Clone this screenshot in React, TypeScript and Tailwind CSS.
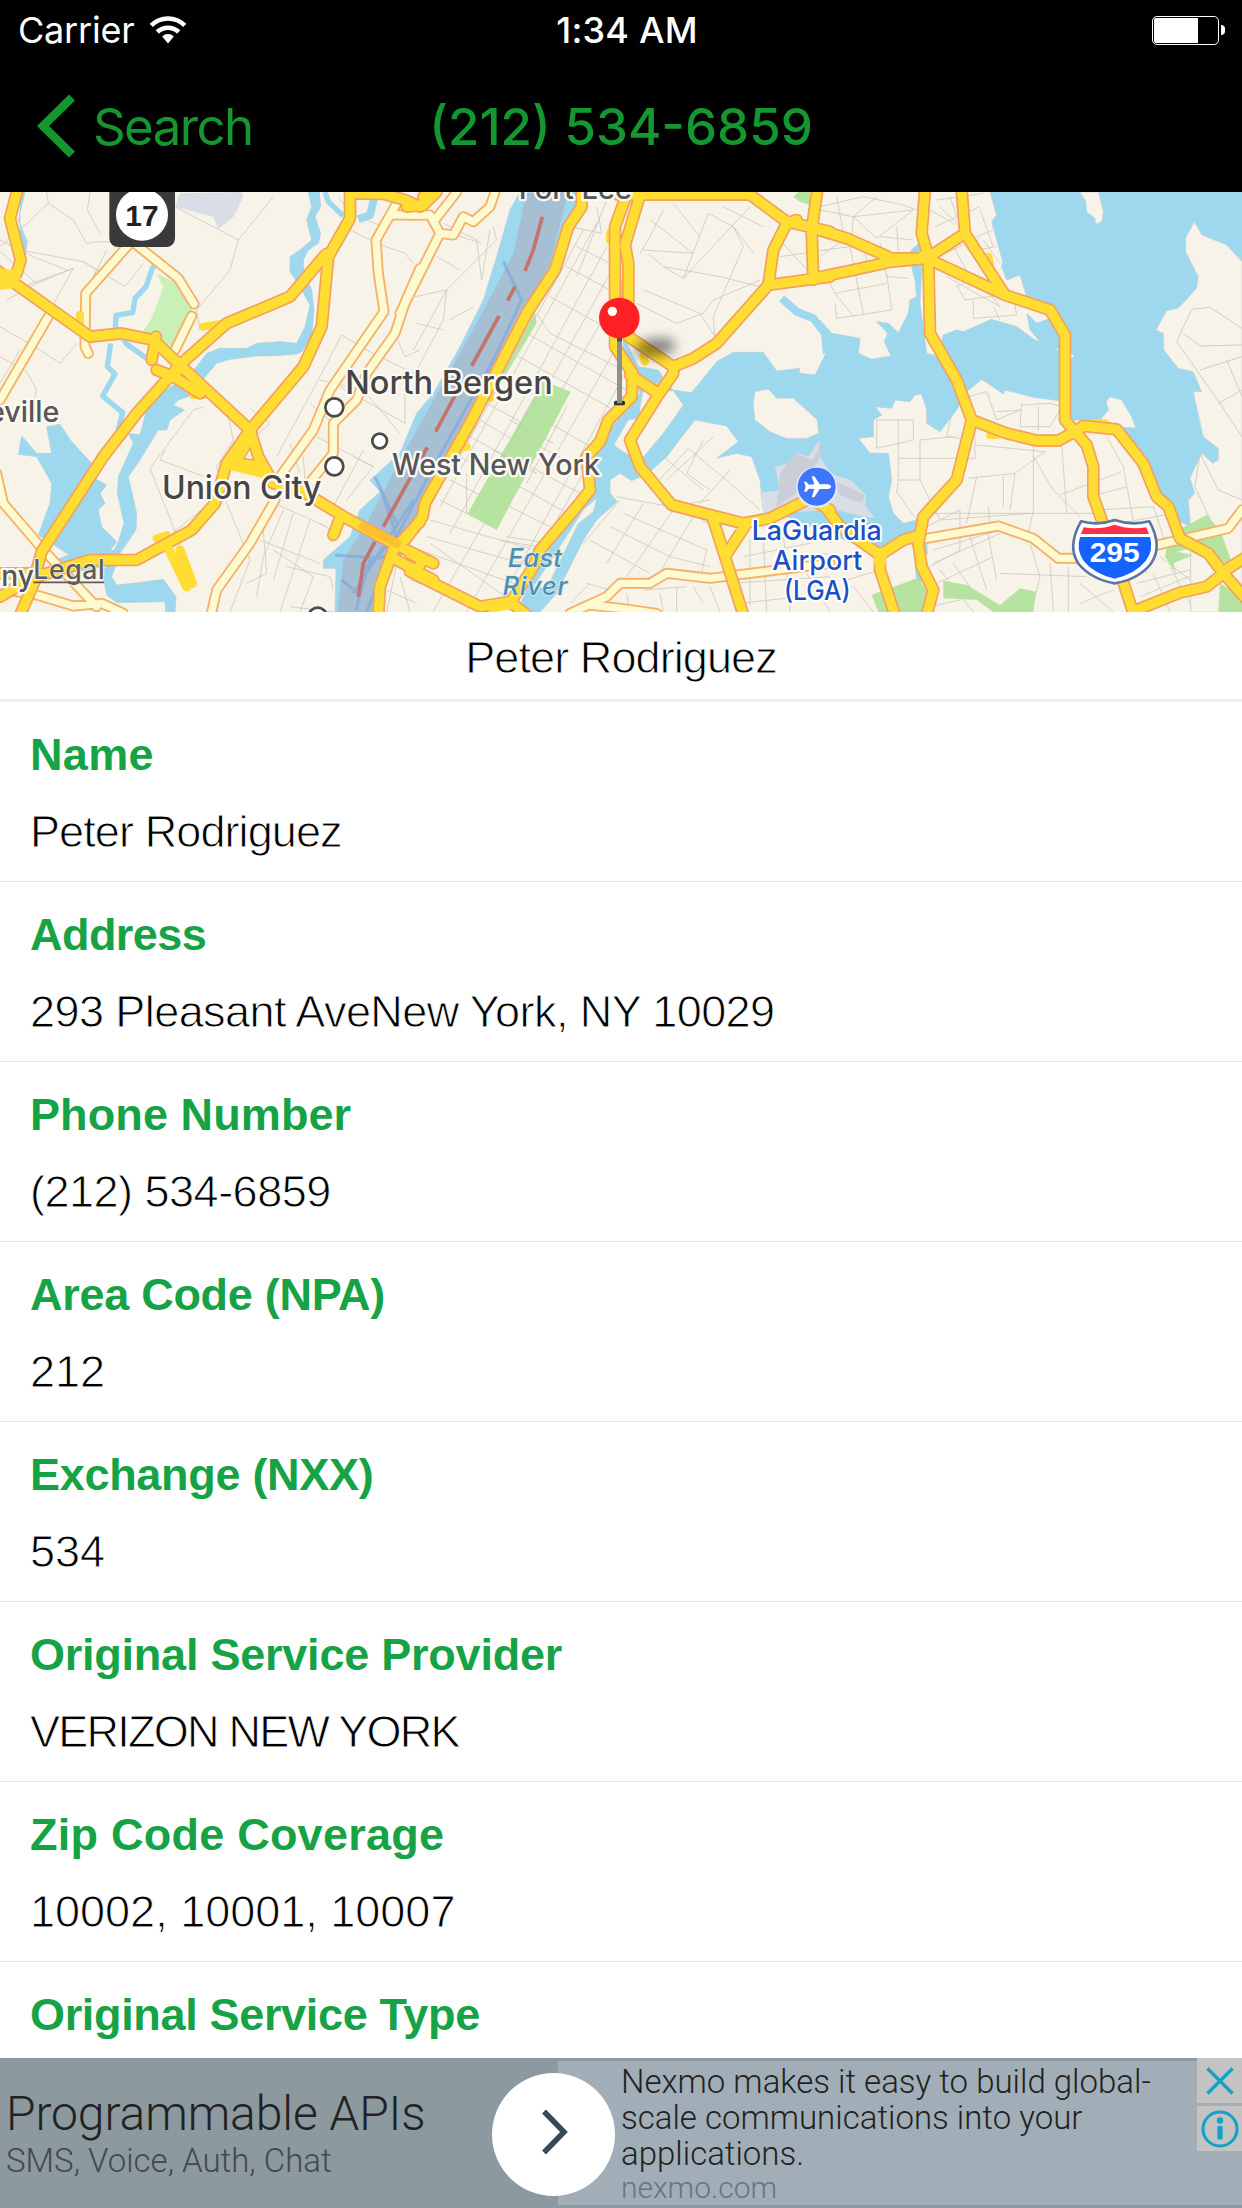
import React from "react";

/** Every shape lists the x offset of the map tile it belongs to, then its path. */
type Shape = [number, string];

const A = 0;
const B = 1230;
const C = 2460;

const streets: Shape[] = [
  [A, "M140 6L145 40 70 110 0 170M145 40L220 90 260 160 300 155 340 155M270 6L262 60 300 130M525 50L715 150 690 240 590 360 600 420M715 150L820 20M0 185L110 280 220 235 70 290M60 180L250 215 375 290 430 220M250 215L290 240 280 260 320 180M110 280L20 330M220 235L140 380M0 410L120 480 180 520 230 460M0 500L80 545 110 600 100 640M60 480L0 580M200 240L100 200 0 150"],
  [A, "M580 660L450 835 520 1010 575 1160M680 660L700 750 650 830 680 940 750 1110M480 810L640 870M480 810L495 780M580 660L610 650M750 655L810 700 700 800M640 930L480 1060M1025 435L960 560 830 800M1025 435L1100 480 1260 560M1050 120L1130 160 1215 190 1240 220M1015 20L1050 70 1150 110M1175 410L1215 500 1260 480M1020 590L1215 700 1215 600M960 570L1090 600 1200 730M930 640L1000 700M950 740L1120 830 1080 880 1040 930M1090 780L1000 950M1120 830L1060 800M910 800L915 880M870 760L900 850"],
  [A, "M800 930L980 1010M850 960L790 1100 770 1220M930 990L840 1266M880 970L820 1170M780 1050L960 1120M820 1080L940 1160 900 1266M860 1130L990 1160 1000 1200M870 1250L1000 1266M750 1110L690 1266M790 1020L800 1150 740 1180M960 1000L1010 1030M1200 1160L1230 1266M1230 1170L1260 1180M1160 1200L1250 1240M1190 1120L1160 1266"],
  [B, "M15 320L110 300 260 150 250 110M100 100L200 150 215 270 240 120M110 300L100 390 20 540M110 300L10 480M215 160L60 110M120 390L190 350M100 420L20 400M80 200L150 240M560 50L575 130 480 110M590 30L500 260M700 300L870 370 915 440M715 190L760 230 820 265 1020 50M760 230L930 260 1090 300M895 70L970 110 1030 190M895 70L820 265M720 90L850 190 700 180M760 60L720 140 690 190M790 40L870 140M680 340L800 400 880 370 910 330 1050 270M915 440L910 380 1000 170 970 110M940 50L1060 110M1110 200L1250 180M1110 150L1200 250"],
  [B, "M835 775L960 880 1050 960M835 775L720 900M880 750L830 850 900 900M910 740L770 870M960 840L870 940M760 800L880 900M700 700L790 760M620 920L780 950 900 930M630 930L520 1060M640 970L890 1080 870 1170M540 1050L720 1150M600 1010L780 1100M700 940L590 1120M790 960L650 1160M850 980L730 1180M780 1100L900 1130M540 1180L480 1240M530 1180L600 1200M700 1200L830 1190M750 1210L760 1266M900 1190L930 1266M1020 1050L1020 1250M1060 1040L1070 1266M1120 1030L1140 1266M1000 1100L1200 1060M960 1180L1260 1160M990 1240L1260 1210M1190 1150L1260 1266M650 1210L660 1266M800 1190L800 1266M850 1190L880 1240M920 1020L850 970"],
  [C, "M0 60L100 80 170 145 280 60 100 80 95 140M50 20L65 100 70 130M0 50L130 20 250 45 290 60M170 20L100 80M10 180L90 170 130 370M0 200L70 150M20 260L45 310 100 380M45 310L200 280M45 340L50 385 215 360 200 250M130 150L140 220M180 160L200 260 265 265M230 110L235 180M280 150L180 140M345 110L480 50M360 50L420 110M330 60L400 100M350 30L490 10M445 150L520 120M470 180L530 170M490 150L540 220M400 170L450 260M375 190L460 150M410 285L435 330 580 310M460 330L460 385 590 375 580 320M520 350L540 390M500 300L540 350M380 260L540 350M410 290L470 260M390 20L410 80M480 60L520 170"],
  [C, "M445 620L500 605 530 690 600 660M530 665L605 660M605 640L600 710 690 710 725 650 690 640 605 645M655 650L655 720M170 690L280 690 280 750 170 775 170 690M235 690L235 870 300 870 300 750 400 740M235 805L465 805 465 700M230 905L290 990M235 870L230 910M300 870L360 990 630 970M400 650L380 740 420 745M470 765L675 785 585 850 445 865M640 800L700 900 780 980M725 760L740 970M640 740L640 960 620 1060M585 850L570 960M550 860L550 950M470 860L440 1000M330 970L860 970M505 950L510 1000M320 1010L420 960 420 1080 330 1130M340 1080L540 1020M860 740L910 830 950 1050 980 1150M720 915L905 845M810 920L920 890M830 960L1000 950 1050 1100M900 1000L1060 970"],
  [C, "M340 1120L540 1030M350 1180L520 1100M440 1010L500 1200M500 1010L530 1170M540 1150L800 1160M630 1060L660 1160 640 1240M360 1140L460 1266M400 1120L470 1220M745 1130L745 1266M690 1120L700 1260M780 1180L880 1266M780 1240L880 1200M950 1180L1150 1130M960 1220L1130 1150M1000 1150L1050 1266M1050 1130L1110 1240M1020 1100L1150 1200M80 1170L180 1140M10 1090L80 1110M100 1190L160 1266M330 1250L420 1230"],
];

const water: Shape[] = [
  [A, "M60 6H75L55 90 82 155 75 200 60 140ZM925 6H958L962 50 945 80 962 130 955 160 925 180 910 210 912 245 935 300 942 360 935 440 905 485 890 492 835 497 770 498 690 508 650 520 620 555 565 620 535 630 520 645 553 660 510 690 500 720 475 720 450 760 420 810 385 860 410 970 408 1020 360 1090 335 1160 350 1185 400 1180 490 1168 528 1220 525 1266H497L495 1235 350 1238 320 1215 308 1150 355 1055 372 1000 352 910 355 860 400 760 385 730 420 735 445 640 500 600 590 530 620 490 660 475 740 475 770 460 840 455 890 460 915 410 930 345 900 290 870 245 870 200 900 180 935 150 920 90 935 50Z"],
  [A, "M140 710L180 703 215 755 275 820 275 860 320 885 300 910 315 940 295 960 305 1010 350 1055 310 1110 200 1090 115 1035 150 940 155 880 110 800 55 793 65 738 110 790 155 790ZM150 1120L240 1078 350 1082 335 1125 150 1160Z"],
  [A, "M1530 60L1490 200 1450 330 1380 470 1300 610 1250 670 1200 790 1110 870 1140 905 1080 960 1050 1040 970 1110 970 1135 1008 1135 1005 1266H1130L1150 1140 1240 1010 1290 930 1410 700 1580 370 1665 240 1740 60 1770 6H1560Z"],
  [C, "M-440 600L-385 608 -310 515 -260 487 -170 487 -130 543 -62 535 -60 550 -15 555 18 490 0 390 35 430 120 445 115 490 155 508 213 498 193 455 203 430 170 395 205 400 235 428 265 370 270 330 290 320 285 270 265 190 300 155 305 240 300 340 320 490 350 498 370 435 410 420 430 425 515 388 590 410 645 450 700 470 750 510 765 495 660 455 630 420 620 370 650 400 690 385 620 320 600 255 560 270 545 230 548 215 515 95 530 75 510 6H1266V1266H1112V1010L1070 990 1010 900 960 800 890 710 948 715 935 680 905 630 870 620 858 635 865 660 840 690 760 690 720 632 640 622 555 600 550 612 485 568 440 605 410 660 360 725 320 700 320 660 305 612 285 615 270 635 225 630 215 655 165 650 185 675 160 690 160 740 115 745 150 790 205 790 215 870 205 920 220 970 250 1000 290 990 320 1050 322 1090 305 1110 305 1180 290 1180 280 1040 200 1080 100 1060 -100 980 -170 960 -180 870 -205 800 -250 790 -310 805 -245 755 -280 708 -375 690 -410 735 -460 800 -515 850 -565 872 -600 850 -630 870 -630 910 -608 935 -670 990 -710 1050 -790 1210 -840 1266H-910L-880 1200 -790 1040 -690 900 -675 780 -600 680 -540 610 -560 530 -590 470 -600 280 -590 270 -580 460 -545 530 -485 540 -460 580Z"],
];

const islands: Shape[] = [
  [B, "M700 600L790 603 820 645 760 730 690 812 640 785 612 765 655 690 690 685 690 650ZM560 925L550 965 505 1000 410 1195 370 1190 430 1100 520 960ZM1030 640L1035 605 1075 598 1100 625 1150 625 1222 690 1225 730 1190 745 1130 745 1080 725 1035 690Z"],
  [C, "M1266 215L1220 165 1145 135 1123 95 1097 145V185L1135 260 1130 295 1075 355 1040 362 1008 420 1030 430 1032 480 1075 535 1120 545 1145 605 1120 605 1150 740 1195 775V810L1178 820 1145 790 1110 865 1125 910 1105 930 1112 1010V1266H1266ZM780 6L798 35 800 65 825 85 828 102 845 95 850 65 835 6Z"],
];

const parks: Shape[] = [
  [B, "M400 572L482 605 260 1020 172 972ZM375 365L380 400 290 550 275 555ZM465 205L440 250 410 270ZM1150 20L1165 6H1200V45L1170 35Z"],
  [C, "M155 1215L290 1165 325 1200 325 1266H175ZM370 1172L440 1185 540 1245 600 1195 648 1205 640 1266H520L470 1230 370 1225ZM1085 1015L1160 975 1200 1020 1235 1115 1200 1120 1150 1065 1070 1085 1120 1095 1060 1120 1068 1150 1035 1100 1040 1070 1090 1060ZM1200 1180L1266 1220V1266H1195Z"],
];

const airport: Shape[] = [
  [B, "M1050 908L1110 900 1095 830 1150 815 1165 790 1195 800 1228 750 1230 800 1260 850 1320 870 1370 915 1365 945 1395 985 1340 975 1280 960 1060 970Z"],
  [A, "M540 10L525 50 640 80 655 118 700 80 730 20 725 6Z"],
];

const minor: Shape[] = [
  [A, "M385 165L257 310 255 470 265 490M410 165L535 265 582 342M575 378L525 480M145 380L0 630M-10 850L10 940 130 1080 290 1250M20 1200L110 1215 220 1248 305 1240 370 1270M1190 40L1128 150 1135 250 1152 365 990 600 940 720 840 860M1260 235L1218 330 1185 430 1100 550 1070 630 1000 700V790L920 890M825 930L750 1060 650 1200 635 1266M1260 75H1180"],
  [B, "M0 75H60L90 130 -30 370M140 6L75 90M255 6L240 50 190 95 160 80 130 135 90 130M480 1270L590 1220 630 1180 720 1180 770 1150 900 1165 1260 1120M540 1245L640 1256 740 1270"],
  [C, "M320 1045L535 1008 640 1045 715 1105H800M980 1073L1225 1015 1266 960"],
];

const major: Shape[] = [
  [A, "M52 0L30 85 62 210 50 250M-10 240L30 270 150 355 270 440 365 430 460 450 540 525 750 720 775 800 820 880 900 900 1040 985 1180 1060 1300 1120M1050 0V85L985 200 965 410 910 530 750 720 680 820 645 940 575 1020 410 1110H270L110 1160 60 1275M978 192L870 320 680 400 545 520 410 670 310 800 125 1085 95 1190M468 440L455 510M470 540L520 560 600 610M755 730L705 820 790 830M1020 985L1000 1035M1060 10L1150 12 1215 30 1260 50M1260 995L1180 1080 1140 1190 1135 1275M1190 1110L1300 1170M0 1150L110 1150M0 1220L120 1150"],
  [B, "M515 0L515 50 475 110 435 240 350 370 180 700 45 940 38 980 -15 1050M655 0L615 110V470L668 550 665 620 595 690 570 755 530 800 540 900 500 950 390 1080 370 1130 300 1240M690 15L645 165 655 220V440L790 530M625 14H1020L1130 95 1260 125M1222 0L1205 120 1210 270M1160 90L1130 100 1090 180 1075 285 920 460 850 505 790 530V550L745 615 660 750 690 830 785 945 900 975 1000 1000 1080 985 1200 925 1260 960M1075 285L1260 260M660 555L745 610M1010 1000L945 1100M905 975L945 1100 1000 1275M0 1090L40 1110 20 1140M0 1145L210 1250 300 1235 350 1275M40 20L80 0M-10 50L40 45 80 6"],
  [C, "M-10 118L80 145 215 205H320M-10 263L100 240 215 215 320 205 420 140M315 0L305 130 325 200 330 430 410 570 455 690 410 870 310 980 295 1060 305 1130 340 1200 320 1275M425 0L435 130 555 315M320 205L555 315 690 360 735 435V690L765 725 800 765 820 830V920L895 1130 940 1270M455 690L560 730 650 752H715L765 725 790 708 890 718 970 820 1010 920 1045 950 1080 1045 1165 1090 1210 1150 1290 1240M1210 1150L1160 1190 1080 1208 950 1260M1210 1145L1280 1100M0 930L60 1010 180 1095 250 1050 300 1035M180 1095V1140L225 1275"],
];

const patches: Shape[] = [
  [A, "M0 265H40M460 455L530 530M695 820L810 850M545 520L520 560M240 375V420M610 410L670 400M1005 1000L1010 1030M580 615H610M470 1045L500 1035"],
  [B, "M700 500L705 515M660 560L670 600M745 590V610M290 1235L240 1250M1120 100H1190M600 130V150M170 770H160M240 610V625"],
  [C, "M215 208H340M315 195V230M160 1085H190M1200 1150H1225M455 700V710M530 735H510M820 700H855M745 720H790M505 200L510 220M285 1045V1060"],
];

function Shapes({ items }: { items: Shape[] }) {
  return (
    <>
      {items.map(([x, d], i) => (
        <path key={i} d={d} transform={`translate(${x} 0)`} />
      ))}
    </>
  );
}

const avenues = "M480 110L100 800M520 120L150 800M560 100L90 950M590 170L120 1030M600 250L240 900M600 350L60 1280M620 470L150 1300M640 560L300 1180M650 620L350 1150";
const crossStreets = "M500 170L600 220M470 230L600 300M420 320L620 430M380 370L420 430 640 540M350 430L650 600M310 490L620 665M270 560L400 630M230 640L340 700M210 690L310 750M420 700L560 780M180 740L290 800M390 770L540 850M150 800L250 860M360 830L530 920M120 870L220 920M330 890L490 980M90 930L190 980M300 950L460 1030M60 990L410 1090M50 1040L370 1130M0 1070L340 1190M170 850V970M60 1060L300 1230M290 1040L420 1060M270 1050L380 1070";

function MapView() {
  return (
    <svg viewBox="0 6 3726 1260" className="block h-[420px] w-full shrink-0" fontFamily="Inter, sans-serif" fontWeight={500}>
      <defs>
        <filter id="pinShade" x="-60%" y="-120%" width="220%" height="340%">
          <feGaussianBlur stdDeviation="17" />
        </filter>
      </defs>
      <rect y="6" width="3726" height="1260" fill="#f7f3e9" />
      <g fill="none" stroke="#cdcbc2" strokeWidth="2.6">
        <Shapes items={streets} />
        <path d={avenues} transform="translate(1230 0)" />
        <path d={crossStreets} transform="translate(1230 0)" />
      </g>
      <path d="M470 250L490 292 455 385 428 425 515 470 560 400 578 355 530 280Z" fill="#c9f0b6" />
      <g fill="#9ed8ef" stroke="#aed0da" strokeWidth="2">
        <Shapes items={water} />
      </g>
      <g fill="none" stroke="#9ed8ef" strokeWidth="16" strokeLinejoin="round">
        <path d="M490 212L458 232 438 290 405 325 398 368 348 376 346 412 380 462 440 505 500 550M332 460L322 530 345 552 308 618 368 668 355 720M975 6L985 35 1030 78" />
        <path d="M1122 25L1110 75 1075 88M2345 325L2390 365 2440 385 2475 430 2480 490" strokeWidth="24" />
      </g>
      <g fill="#f7f3e9" stroke="#cdd3cf" strokeWidth="2">
        <Shapes items={islands} />
      </g>
      <g fill="none" stroke="#c9c7be" strokeWidth="2.6">
        <path transform="translate(2460 0)" d="M1115 358L1170 352 1266 415M1115 358L1070 455 1200 640 1266 740M1090 430L1140 468 1266 465M1140 540L1266 500M1220 510L1266 620M1195 640L1266 600M1140 790L1125 890 1180 1010M1140 790L1195 900 1266 930" />
      </g>
      <path d="M1580 6L1540 190 1430 400 1250 720 1195 820 1100 1000 1030 1110 1012 1266H1120L1140 1140 1220 1040 1270 950 1410 680 1560 400 1650 220 1705 6Z" fill="#a6bfd3" />
      <g fill="none" stroke="#86abd9" strokeWidth="9" opacity=".8">
        <path d="M1510 215L1565 330 1480 510 1300 830 1190 1040 1090 1140 1070 1260M1140 890L1190 1040 1100 1266M1125 860L1190 1000M1240 930L1060 1210M1005 1095L1130 1105 1210 1090M1025 1170L1080 1215 1110 1110" />
      </g>
      <g fill="none" stroke="#c4736c" strokeWidth="11">
        <path d="M1627 80L1600 180 1575 243M1545 290L1523 332M1497 378L1415 528M1366 615L1307 725M1282 772L1230 865M1230 865L1150 1010M1125 1055L1090 1120 1075 1220" />
      </g>
      <g fill="#b6e3a0">
        <Shapes items={parks} />
      </g>
      <path d="M1620 600L1500 820M1700 650L1580 880M1530 690L1660 760M1480 780L1610 850" stroke="#c5c9b4" strokeWidth="2.6" />
      <g fill="#d9dde6">
        <Shapes items={airport} />
      </g>
      <path d="M2340 850L2385 790 2440 810 2465 750 2462 800 2400 900 2330 950Z" fill="#c9ced8" />
      <path d="M2500 870L2595 915 2585 940 2520 915Z" fill="#c9ced8" />
      <g fill="none" strokeLinejoin="round" strokeLinecap="round">
        <g stroke="#f4b267" strokeWidth="33">
          <Shapes items={minor} />
        </g>
        <g stroke="#fdfad2" strokeWidth="22">
          <Shapes items={minor} />
        </g>
        <g stroke="#ffdd33" strokeWidth="24">
          <Shapes items={patches} />
        </g>
        <g stroke="#f3a15b" strokeWidth="38">
          <Shapes items={major} />
        </g>
        <g stroke="#ffdd33" strokeWidth="28">
          <Shapes items={major} />
        </g>
        <path d="M1090 1010L1190 1060" stroke="#ffc02e" strokeWidth="27" />
        <path d="M505 1075L560 1190M540 1080L577 1180" stroke="#ffdd33" strokeWidth="28" />
        <path d="M0 258H40M0 280L35 275" stroke="#ffdd33" strokeWidth="40" />
        <path d="M750 735L700 825 800 850M2770 200L2790 215M2640 1090V1120M1530 1240L1480 1250M540 520L520 560" stroke="#ffdd33" strokeWidth="34" />
      </g>

      {/* Route shields */}
      <rect x="328" y="-30" width="197" height="201" rx="26" fill="#3a3a3a" />
      <circle cx="426" cy="74" r="78" fill="#fff" />
      <text x="426" y="107" textAnchor="middle" fontSize="90" fontWeight={700} fontFamily="'Liberation Sans', sans-serif" fill="#222">17</text>
      <path d="M3243 994Q3295 1008 3344 990Q3395 1008 3448 994Q3490 1070 3452 1122Q3415 1168 3344 1180Q3275 1168 3236 1122Q3200 1070 3243 994Z" fill="#fff" stroke="#5b75a6" strokeWidth="8" strokeLinejoin="round" />
      <path d="M3251 1012Q3300 1020 3344 1004Q3390 1020 3439 1012L3447 1032H3243Z" fill="#ff2f49" />
      <path d="M3240 1041H3450Q3462 1080 3437 1113Q3405 1152 3344 1166Q3283 1152 3251 1113Q3228 1080 3240 1041Z" fill="#1463ff" />
      <text x="3344" y="1117" textAnchor="middle" fontSize="84" textLength="150" lengthAdjust="spacingAndGlyphs" fontWeight={700} fontFamily="'Liberation Sans', sans-serif" fill="#fff">295</text>

      {/* City markers */}
      <g fill="#fff" stroke="#4a4a48" strokeWidth="8">
        <circle cx="1003" cy="652" r="27" />
        <circle cx="1139" cy="753" r="22" />
        <circle cx="1003" cy="829" r="27" />
        <circle cx="953" cy="1280" r="27" />
      </g>

      {/* Place names */}
      <g fill="#454545" stroke="#fbf9f4" strokeWidth="14" strokeLinejoin="round" paintOrder="stroke">
        <text x="1036" y="612" fontSize="96" textLength="622" lengthAdjust="spacingAndGlyphs">North Bergen</text>
        <text x="486" y="927" fontSize="96" textLength="478" lengthAdjust="spacingAndGlyphs">Union City</text>
        <text x="1176" y="854" fontSize="88" textLength="624" lengthAdjust="spacingAndGlyphs" fill="#565656">West New York</text>
        <text x="-36" y="695" fontSize="88" textLength="214" lengthAdjust="spacingAndGlyphs" fill="#565656">eville</text>
        <text x="4" y="1188" fontSize="88" textLength="98" lengthAdjust="spacingAndGlyphs" fill="#565656">ny</text>
        <text x="1556" y="27" fontSize="88" textLength="340" lengthAdjust="spacingAndGlyphs" fill="#565656">Fort Lee</text>
      </g>
      <text x="100" y="1167" fontSize="80" textLength="214" fontWeight={500} fill="#5d5c57" stroke="#f7f3e9" strokeWidth="5" paintOrder="stroke">Legal</text>
      <path d="M100 1177H312" stroke="#5d5c57" strokeWidth="5" />
      <g fill="#4d8fb1" stroke="#dcebea" strokeWidth="5" paintOrder="stroke" fontStyle="italic" fontSize="76">
        <text x="1524" y="1131" textLength="162">East</text>
        <text x="1508" y="1215" textLength="194">River</text>
      </g>
      <circle cx="2450" cy="892" r="62" fill="#e3ebf7" />
      <circle cx="2450" cy="890" r="57" fill="#3d76fb" />
      <path d="M2493 890C2493 884 2485 883 2478 883L2459 883 2443 859H2435L2443 883 2427 884 2419 875H2412L2417 890 2412 905H2419L2427 896 2443 897 2435 922H2443L2459 897H2478C2485 897 2493 896 2493 890Z" fill="#fff" />
      <g fill="#1d4fc7" stroke="#fff" strokeWidth="12" strokeLinejoin="round" paintOrder="stroke" fontSize="82">
        <text x="2255" y="1049" textLength="390" lengthAdjust="spacingAndGlyphs">LaGuardia</text>
        <text x="2317" y="1139" textLength="270" lengthAdjust="spacingAndGlyphs">Airport</text>
        <text x="2352" y="1229" textLength="200" lengthAdjust="spacingAndGlyphs">(LGA)</text>
      </g>

      {/* Dropped pin */}
      <ellipse cx="1965" cy="473" rx="62" ry="28" transform="rotate(-8 1965 473)" fill="#000" opacity=".45" filter="url(#pinShade)" />
      <rect x="1842" y="632" width="33" height="14" rx="5" fill="#2d2d2d" />
      <rect x="1851" y="440" width="15" height="200" fill="#8d9093" />
      <rect x="1851" y="440" width="15" height="14" fill="#4d4d4d" />
      <circle cx="1858" cy="384" r="61" fill="#fd2126" />
      <circle cx="1837" cy="364" r="14" fill="#fff" />
    </svg>
  );
}

function StatusBar() {
  return (
    <div className="grid h-[60px] grid-cols-3 items-center text-[36px] leading-[60px] text-white">
      <div className="flex items-center pl-[18px]">
        <span className="tracking-[-0.2px]">Carrier</span>
        <svg viewBox="0 0 38 28" className="ml-[14px] h-[28px] w-[38px]">
          <path d="M19 27.5L13.2 20.4A8.5 8.5 0 0 1 24.800 20.400Z" fill="#fff" />
          <path d="M2.200 9.300A24 24 0 0 1 35.800 9.300M8.300 16A15.500 15.500 0 0 1 29.700 16" fill="none" stroke="#fff" strokeWidth="4.600" />
        </svg>
      </div>
      <span className="pl-[12px] text-center font-[550] tracking-[0.2px]">1:34 AM</span>
      <div className="flex items-center justify-end gap-[2px] pr-[17px]">
        <div className="h-[29px] w-[67px] rounded-[5px] border border-white p-px">
          <div className="h-full w-[44px] rounded-l-[2px] bg-white" />
        </div>
        <div className="h-[10px] w-[4px] rounded-r-full bg-white" />
      </div>
    </div>
  );
}

const rows = [
  { label: "Name", labelTracking: "tracking-[0.35px]", value: "Peter Rodriguez", tracking: "tracking-[-0.9px]" },
  { label: "Address", labelTracking: "tracking-[-0.55px]", value: "293 Pleasant AveNew York, NY 10029", tracking: "tracking-[-0.57px]" },
  { label: "Phone Number", labelTracking: "tracking-[0.1px]", value: "(212) 534-6859", tracking: "tracking-[-0.5px]" },
  { label: "Area Code (NPA)", labelTracking: "tracking-[-0.28px]", value: "212", tracking: "tracking-[0px]" },
  { label: "Exchange (NXX)", labelTracking: "tracking-[-0.3px]", value: "534", tracking: "tracking-[0px]" },
  { label: "Original Service Provider", labelTracking: "tracking-[-0.23px]", value: "VERIZON NEW YORK", tracking: "tracking-[-1.75px]" },
  { label: "Zip Code Coverage", labelTracking: "tracking-[0.24px]", value: "10002, 10001, 10007", tracking: "tracking-[0px]" },
  { label: "Original Service Type", labelTracking: "tracking-[-0.33px]", value: "", tracking: "" },
];

/** A light-weight cut of the sans face: the white outline thins its strokes. */
const light = "[-webkit-text-stroke:0.9px_white]";

function AdBanner() {
  return (
    <footer className="relative flex h-[150px] shrink-0 bg-[#8c999f] py-[3px] font-[Roboto,sans-serif] font-light">
      <div className="flex w-[558px] flex-col pt-[25px] pl-[6px]">
        <span className="text-[48px] leading-[56px] tracking-[-0.1px] text-[#222]">Programmable APIs</span>
        <span className="pt-px text-[33px] leading-[36px] text-[#43494c]">SMS, Voice, Auth, Chat</span>
      </div>
      <div className="flex flex-1 flex-col bg-[#a1aeb7] pl-[63px] text-[33px] leading-[36px] text-[#222]">
        <p className="w-[560px] pt-[3px]">
          Nexmo makes it easy to build global-
          <br />
          scale communications into your
          <br />
          applications.
        </p>
        <span className="text-[30px] leading-[32px] text-[#69757b]">nexmo.com</span>
      </div>
      <div className="absolute top-[15px] left-[492px] flex h-[123px] w-[123px] items-start justify-center rounded-full bg-white pt-[36px] pl-[2px]">
        <svg viewBox="0 0 28 46" className="h-[46px] w-[28px]">
          <path d="M3 2.500L23 23 3 43.500" fill="none" stroke="#374b57" strokeWidth="5.500" />
        </svg>
      </div>
      <div className="absolute top-0 right-0 flex flex-col gap-[3px]">
        <div className="flex h-[45px] w-[45px] items-center justify-center bg-[#c3c3c3]">
          <svg viewBox="0 0 28 28" className="h-[28px] w-[28px]">
            <path d="M1.500 1.500L26.500 26.500M26.500 1.500L1.500 26.500" stroke="#12a1c8" strokeWidth="3.400" />
          </svg>
        </div>
        <div className="flex h-[45px] w-[45px] items-center justify-center bg-[#c3c3c3]">
          <svg viewBox="0 0 38 38" className="h-[38px] w-[38px]">
            <circle cx="19" cy="19" r="17" fill="none" stroke="#12a1c8" strokeWidth="3" />
            <circle cx="19" cy="10.500" r="3.200" fill="#12a1c8" />
            <path d="M19 16V29.500" stroke="#12a1c8" strokeWidth="5.200" />
          </svg>
        </div>
      </div>
    </footer>
  );
}

export default function App() {
  return (
    <div className="flex h-[2208px] w-[1242px] flex-col overflow-hidden bg-white font-['Liberation_Sans',sans-serif]">
      <header className="h-[192px] shrink-0 bg-black font-[Inter,sans-serif]">
        <StatusBar />
        <nav className="grid h-[132px] grid-cols-[1fr_auto_1fr] items-center text-[51px] leading-[62px] text-[#149631]">
          <a className="flex items-center pl-[36px]">
            <svg viewBox="0 0 40 64" className="h-[64px] w-[40px]">
              <path d="M36 3.500L7 32 36 60.500" fill="none" stroke="#149631" strokeWidth="8.500" />
            </svg>
            <span className="ml-[17px] pt-[2px] tracking-[-1.6px]">Search</span>
          </a>
          <h1 className="pt-[2px] font-[550] tracking-[0px]">(212) 534-6859</h1>
        </nav>
      </header>
      <MapView />
      <h2 className={`h-[90px] shrink-0 border-b-[3px] border-[#ededed] pt-[20px] text-center text-[45px] leading-[52px] tracking-[-0.9px] text-black ${light}`}>
        Peter Rodriguez
      </h2>
      <main className="min-h-0 flex-1 overflow-hidden">
        {rows.map((r) => (
          <section key={r.label} className="h-[180px] border-b border-[#e9e9e9] pt-[27px] pl-[30px] text-[45px] leading-[52px]">
            <h3 className={`font-bold text-[#16a345] ${r.labelTracking}`}>{r.label}</h3>
            <p className={`mt-[25px] text-black ${r.tracking} ${light}`}>{r.value}</p>
          </section>
        ))}
      </main>
      <AdBanner />
    </div>
  );
}
